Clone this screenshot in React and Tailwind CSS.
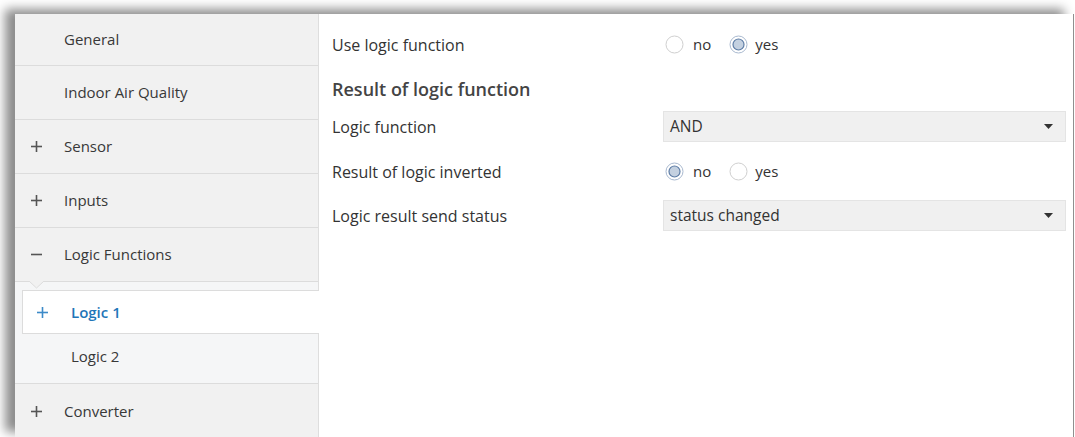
import { useState } from "react"

const font = { fontFamily: '"Open Sans", "Noto Sans", sans-serif' }

const navItems = [
  { label: "General", icon: null, h: "h-[52px]" },
  { label: "Indoor Air Quality", icon: null },
  { label: "Sensor", icon: "plus" },
  { label: "Inputs", icon: "plus" },
  { label: "Logic Functions", icon: "minus" },
]

function Sign({ type, color = "#555" }) {
  return (
    <svg width="11" height="11" viewBox="0 0 11 11">
      <path d="M0 5.5h11" stroke={color} strokeWidth="1.6" />
      {type === "plus" && <path d="M5.5 0v11" stroke={color} strokeWidth="1.6" />}
    </svg>
  )
}

function Radio({ checked }) {
  return (
    <svg width="19" height="19" viewBox="0 0 19 19">
      {checked ? (
        <>
          <circle cx="9.5" cy="9.5" r="8.5" fill="#fff" stroke="#a9b9cf" strokeWidth="1" />
          <circle cx="9.5" cy="9.5" r="5.5" fill="#c3d0e0" stroke="#5e7da6" strokeWidth="1.2" />
        </>
      ) : (
        <circle cx="9.5" cy="9.5" r="8.5" fill="#fff" stroke="#cfcfcf" strokeWidth="1" />
      )}
    </svg>
  )
}

function RadioGroup({ value, onChange }) {
  return (
    <div className="flex items-center h-full pl-[2px]">
      <button className="flex items-center" onClick={() => onChange("no")}>
        <Radio checked={value === "no"} />
        <span className="ml-[9px] text-[15px] text-[#333]">no</span>
      </button>
      <button className="flex items-center ml-[18px]" onClick={() => onChange("yes")}>
        <Radio checked={value === "yes"} />
        <span className="ml-[7px] text-[15px] text-[#333]">yes</span>
      </button>
    </div>
  )
}

function Select({ value }) {
  return (
    <div className="h-full flex items-center justify-between bg-[#f0f0f0] border border-[#e4e4e4] pl-[6px] pr-[12px]">
      <span className="text-[15.5px] text-[#333]">{value}</span>
      <svg width="9" height="5" viewBox="0 0 9 5">
        <path d="M0 0h9L4.5 5z" fill="#333" />
      </svg>
    </div>
  )
}

export default function App() {
  const [useLogic, setUseLogic] = useState("yes")
  const [inverted, setInverted] = useState("no")

  return (
    <div className="w-[1075px] h-[437px] bg-white overflow-hidden" style={font}>
      <div className="ml-[15px] mt-[14px] w-[1059px] h-[423px] flex bg-white border-r border-[#8f8f8f] shadow-[-10px_-5px_10px_rgba(0,0,0,0.45)]">
        {/* Sidebar */}
        <div className="w-[304px] shrink-0 bg-[#f1f1f1] border-r border-[#dedede] flex flex-col">
          {navItems.map((item) => (
            <div
              key={item.label}
              className={`${item.h || "h-[54px]"} shrink-0 flex items-center border-b border-[#dcdcdc]`}
            >
              <div className="w-[42px] flex justify-center">
                {item.icon && <Sign type={item.icon} />}
              </div>
              <span className="ml-[7px] text-[15px] text-[#383838]">{item.label}</span>
            </div>
          ))}

          {/* Logic Functions children */}
          <div className="relative bg-[#f5f6f7] border-b border-[#dcdcdc] pt-[8px]">
            <svg className="absolute left-[14px] top-[-1px]" width="15" height="8" viewBox="0 0 15 8">
              <path d="M0 0L7.5 7L15 0" fill="#f1f1f1" stroke="#dcdcdc" strokeWidth="1" />
            </svg>
            <div className="h-[44px] ml-[7px] mr-[-1px] flex items-center bg-white border border-r-0 border-[#dcdcdc] relative">
              <div className="w-[38px] flex justify-center">
                <Sign type="plus" color="#3d8bc8" />
              </div>
              <span className="ml-[10px] text-[15px] font-semibold text-[#1f76b8]">Logic 1</span>
            </div>
            <div className="h-[49px] flex items-center pl-[56px] pb-[5px]">
              <span className="text-[15px] text-[#383838]">Logic 2</span>
            </div>
          </div>

          <div className="h-[54px] shrink-0 flex items-center">
            <div className="w-[42px] flex justify-center">
              <Sign type="plus" />
            </div>
            <span className="ml-[7px] text-[15px] text-[#383838]">Converter</span>
          </div>
        </div>

        {/* Parameters */}
        <div className="flex-1 pl-[13px] pr-[7px] pt-[15px]">
          <div className="h-[31px] grid grid-cols-[331px_1fr] items-center">
            <span className="text-[16px] text-[#333]">Use logic function</span>
            <RadioGroup value={useLogic} onChange={setUseLogic} />
          </div>

          <div className="h-[30px] mt-[14px] flex items-center">
            <span className="text-[18px] font-semibold text-[#444]">Result of logic function</span>
          </div>

          <div className="h-[31px] mt-[7px] grid grid-cols-[331px_1fr] items-center">
            <span className="text-[16px] text-[#333]">Logic function</span>
            <Select value="AND" />
          </div>

          <div className="h-[31px] mt-[14px] grid grid-cols-[331px_1fr] items-center">
            <span className="text-[16px] text-[#333]">Result of logic inverted</span>
            <RadioGroup value={inverted} onChange={setInverted} />
          </div>

          <div className="h-[31px] mt-[13px] grid grid-cols-[331px_1fr] items-center">
            <span className="text-[16px] text-[#333]">Logic result send status</span>
            <Select value="status changed" />
          </div>
        </div>
      </div>
    </div>
  )
}
